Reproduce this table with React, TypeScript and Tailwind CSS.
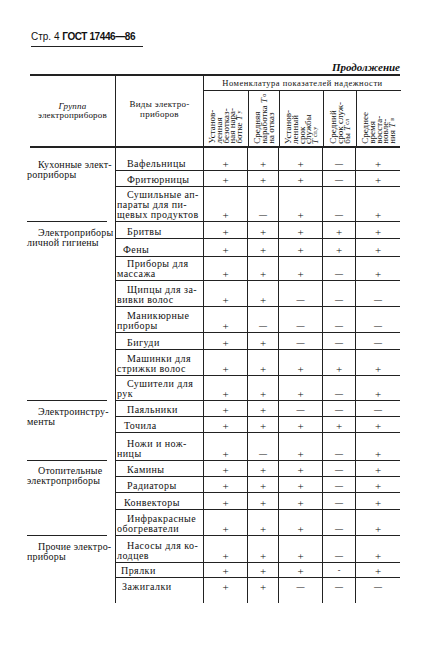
import React from "react";

type Row = { lines: string[]; h: number; v: string[]; ind?: number };
type Group = { label: string[]; pt: number; rows: Row[] };

const P = "+";
const M = "—";

const groups: Group[] = [
  {
    label: ["Кухонные элект-", "роприборы"],
    pt: 12,
    rows: [
      { lines: ["Вафельницы"], h: 23, v: [P, P, P, M, P] },
      { lines: ["Фритюрницы"], h: 16, v: [P, P, P, M, P] },
      { lines: ["Сушильные ап-", "параты для пи-", "щевых продуктов"], h: 35, v: [P, M, P, M, P] },
    ],
  },
  {
    label: ["Электроприборы", "личной гигиены"],
    pt: 6,
    rows: [
      { lines: ["Бритвы"], h: 17, v: [P, P, P, P, P] },
      { lines: ["Фены"], h: 18, v: [P, P, P, P, P], ind: 6 },
      { lines: ["Приборы для", "массажа"], h: 24, v: [P, P, P, M, P] },
      { lines: ["Щипцы для за-", "вивки волос"], h: 26, v: [P, P, M, M, M] },
      { lines: ["Маникюрные", "приборы"], h: 26, v: [P, M, M, M, M] },
      { lines: ["Бигуди"], h: 17, v: [P, P, M, M, M] },
      { lines: ["Машинки для", "стрижки волос"], h: 26, v: [P, P, P, P, P] },
      { lines: ["Сушители для", "рук"], h: 25, v: [P, P, P, M, P] },
    ],
  },
  {
    label: ["Электроинстру-", "менты"],
    pt: 6,
    rows: [
      { lines: ["Паяльники"], h: 16, v: [P, P, M, M, M] },
      { lines: ["Точила"], h: 16, v: [P, P, P, P, P], ind: 7 },
      { lines: ["Ножи и нож-", "ницы"], h: 28, v: [P, M, P, M, P] },
    ],
  },
  {
    label: ["Отопительные", "электроприборы"],
    pt: 5,
    rows: [
      { lines: ["Камины"], h: 16, v: [P, P, P, M, P] },
      { lines: ["Радиаторы"], h: 16, v: [P, P, P, M, P] },
      { lines: ["Конвекторы"], h: 17, v: [P, P, P, M, P], ind: 7 },
      { lines: ["Инфракрасные", "обогреватели"], h: 26, v: [P, P, P, M, P] },
    ],
  },
  {
    label: ["Прочие электро-", "приборы"],
    pt: 6,
    rows: [
      { lines: ["Насосы для ко-", "лодцев"], h: 27, v: [P, P, P, M, P] },
      { lines: ["Прялки"], h: 15, v: [P, P, P, "-", P], ind: 4 },
      { lines: ["Зажигалки"], h: 25, v: [P, P, M, M, M], ind: 5 },
    ],
  },
];

const colW = ["w-[44px]", "w-[31px]", "w-[44px]", "w-[33px]", "w-[45px]"];

function Mark({ m }: { m: string }) {
  if (m === M) return <span className="text-[8px] leading-[10px]">—</span>;
  if (m === "-") return <span className="text-[8px] leading-[10px]">-</span>;
  return <span className="text-[11px] leading-[10px]">+</span>;
}

function VText({ lines }: { lines: React.ReactNode[] }) {
  return (
    <div className="[writing-mode:vertical-rl] rotate-180 text-[9px] leading-[6.8px] whitespace-nowrap">
      {lines.map((l, i) => (
        <div key={i}>{l}</div>
      ))}
    </div>
  );
}

export default function App() {
  const sub = [
    ["Установ-", "ленная", "безотказ-", "ная нара-", <span key="a">ботке <i>T</i><sub className="text-[6px]">у</sub></span>],
    ["Средняя", <span key="b">наработка <i>T</i><sub className="text-[6px]">о</sub></span>, "на отказ"],
    ["Установ-", "ленный", "срок", "службы", <span key="c"><i>T</i><sub className="text-[6px]">сл.у</sub></span>],
    ["Средний", "срок служ-", <span key="d">бы <i>T</i><sub className="text-[6px]">сл</sub></span>],
    ["Среднее", "время", "восста-", "новле-", <span key="e">ния <i>T</i><sub className="text-[6px]">в</sub></span>],
  ];

  return (
    <div
      className="w-[421px] h-[648px] bg-white text-[#111] overflow-hidden flex flex-col"
      style={{ fontFamily: '"Liberation Serif", "DejaVu Serif", serif' }}
    >
      <div className="flex pl-[31px] pt-[31px]">
        <div
          className="w-[112px] border-b-[1.5px] border-[#222] pb-[4px] text-[10px] leading-[11px] whitespace-nowrap"
          style={{ fontFamily: '"Liberation Sans", Arial, sans-serif' }}
        >
          Стр. 4 <span className="font-bold tracking-[-0.4px]">ГОСТ 17446—86</span>
        </div>
      </div>
      <div className="mt-[15px] h-[11px] pr-[21px] text-right text-[11px] leading-[11px] font-bold italic">
        Продолжение
      </div>

      <div className="ml-[30px] mt-[1px] w-[370px] flex flex-col">
        {/* header */}
        <div className="flex h-[74px] shrink-0 border-t-2 border-b-2 border-[#222]">
          <div className="w-[85px] shrink-0 flex flex-col items-center justify-center text-[9px] leading-[9px] tracking-[0.2px] whitespace-nowrap">
            <div className="italic">Группа</div>
            <div>электроприборов</div>
          </div>
          <div className="w-[88px] shrink-0 border-l border-[#222] flex flex-col items-center justify-center pb-[5px] text-[9px] leading-[10px] tracking-[0.3px] whitespace-nowrap">
            <div>Виды электро-</div>
            <div>приборов</div>
          </div>
          <div className="flex-1 border-l border-[#222] flex flex-col">
            <div className="h-[15px] shrink-0 border-b border-[#222] flex items-center justify-center text-[8.5px] tracking-[0.5px] whitespace-nowrap">
              Номенклатура показателей надежности
            </div>
            <div className="flex flex-1 min-h-0">
              {sub.map((s, i) => (
                <div
                  key={i}
                  className={`${colW[i]} ${i > 0 ? "border-l border-[#222]" : ""} shrink-0 flex items-end justify-center pb-[2px] overflow-hidden`}
                >
                  <VText lines={s} />
                </div>
              ))}
            </div>
          </div>
        </div>

        {/* body */}
        {groups.map((g, gi) => {
          const lastG = gi === groups.length - 1;
          return (
            <div key={gi} className="flex shrink-0">
              <div className="w-[85px] shrink-0 pr-[5px] -ml-[3px]">
                <div
                  className={`h-full ${lastG ? "" : "border-b border-[#222]"} text-[10px] leading-[10px] tracking-[0.2px] whitespace-nowrap`}
                  style={{ paddingTop: g.pt }}
                >
                  {g.label.map((l, i) => (
                    <div key={i} className={i === 0 ? "pl-[11px]" : ""}>
                      {l}
                    </div>
                  ))}
                </div>
              </div>
              <div className="flex flex-col ml-[3px]">
                {g.rows.map((r, ri) => {
                  const last = lastG && ri === g.rows.length - 1;
                  return (
                    <div
                      key={ri}
                      className={`flex shrink-0 ${last ? "" : "border-b border-[#222]"}`}
                      style={{ height: r.h }}
                    >
                      <div
                        className={`w-[88px] shrink-0 border-l border-[#222] flex flex-col ${last ? "justify-start pt-[4px]" : "justify-end pb-[1px]"} pl-[1px] text-[10px] leading-[10px] tracking-[0.45px] whitespace-nowrap`}
                      >
                        {r.lines.map((l, i) => (
                          <div key={i} style={i === 0 ? { paddingLeft: r.ind ?? 10 } : undefined}>
                            {l}
                          </div>
                        ))}
                      </div>
                      {r.v.map((m, mi) => (
                        <div
                          key={mi}
                          className={`${colW[mi]} shrink-0 border-l border-[#222] flex ${last ? "items-start pt-[4px]" : "items-end pb-[1px]"} justify-center`}
                        >
                          <Mark m={m} />
                        </div>
                      ))}
                    </div>
                  );
                })}
              </div>
            </div>
          );
        })}
      </div>
    </div>
  );
}
